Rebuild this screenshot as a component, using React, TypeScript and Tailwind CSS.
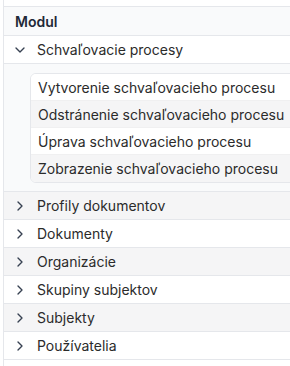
import React from 'react';
import { ChevronDown, ChevronRight } from 'lucide-react';

const actions = [
  'Vytvorenie schvaľovacieho procesu',
  'Odstránenie schvaľovacieho procesu',
  'Úprava schvaľovacieho procesu',
  'Zobrazenie schvaľovacieho procesu',
];

const modules = [
  'Profily dokumentov',
  'Dokumenty',
  'Organizácie',
  'Skupiny subjektov',
  'Subjekty',
  'Používatelia',
];

export default function App() {
  return (
    <div
      className="w-[290px] h-[366px] overflow-hidden bg-white text-[14px] text-[#2b2b2b]"
      style={{ fontFamily: 'Inter, "Noto Sans", sans-serif' }}
    >
      <div className="ml-[3px] w-[340px] h-full border-l border-[#e5e7eb] pt-[6px]">
        {/* Header */}
        <div className="h-[30px] flex items-center px-[11px] bg-[#f9fafb] border-y border-[#e5e7eb] font-semibold text-[#1f2937]">
          Modul
        </div>

        {/* Expanded module */}
        <div className="h-[28px] flex items-center pl-[8px] border-b border-[#e5e7eb] bg-white">
          <ChevronDown className="w-4 h-4 text-[#374151]" strokeWidth={2} />
          <span className="ml-[9px]">Schvaľovacie procesy</span>
        </div>
        <div className="bg-[#f9fafb] border-b border-[#e5e7eb] pl-[26px] pt-[9px] pb-[8px]">
          <div className="rounded-l-md border border-[#e5e7eb] overflow-hidden bg-white">
            {actions.map((a, i) => (
              <div
                key={a}
                className={`h-[27px] flex items-center px-[7px] ${
                  i % 2 === 1 ? 'bg-[#f5f5f6]' : 'bg-white'
                } ${i < actions.length - 1 ? 'border-b border-[#f0f0f1]' : ''}`}
              >
                {a}
              </div>
            ))}
          </div>
        </div>

        {/* Collapsed modules */}
        {modules.map((m, i) => (
          <div
            key={m}
            className={`h-[28px] flex items-center pl-[8px] border-b border-[#e5e7eb] ${
              i % 2 === 0 ? 'bg-[#f5f5f6]' : 'bg-white'
            }`}
          >
            <ChevronRight className="w-4 h-4 text-[#374151]" strokeWidth={2} />
            <span className="ml-[9px]">{m}</span>
          </div>
        ))}
      </div>
    </div>
  );
}
